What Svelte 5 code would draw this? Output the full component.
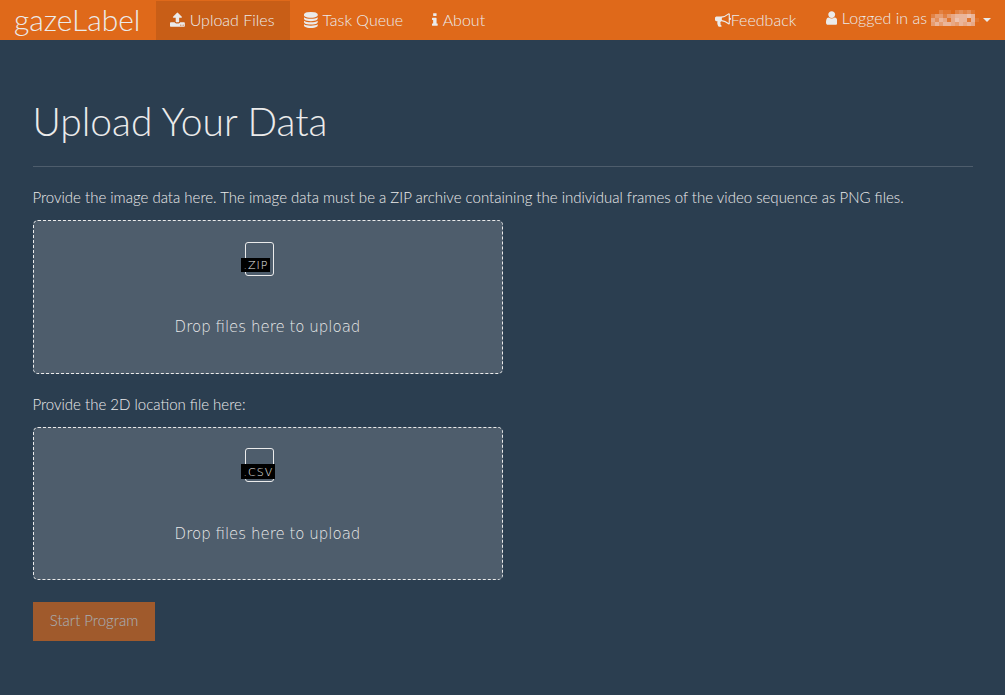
<script>
  const icons = {
    upload: 'M1344 1472q0-26-19-45t-45-19-45 19-19 45 19 45 45 19 45-19 19-45zm256 0q0-26-19-45t-45-19-45 19-19 45 19 45 45 19 45-19 19-45zm128-224v320q0 40-28 68t-68 28h-1472q-40 0-68-28t-28-68v-320q0-40 28-68t68-28h427q21 56 70.5 92t110.5 36h256q61 0 110.5-36t70.5-92h427q40 0 68 28t28 68zm-325-648q-17 40-59 40h-256v448q0 26-19 45t-45 19h-256q-26 0-45-19t-19-45v-448h-256q-42 0-59-40-17-39 14-69l448-448q18-19 45-19t45 19l448 448q31 30 14 69z',
    database: 'M896 768q237 0 443-43t325-127v170q0 69-103 128t-280 93.5-385 34.5-385-34.5-280-93.5-103-128v-170q119 84 325 127t443 43zm0 768q237 0 443-43t325-127v170q0 69-103 128t-280 93.5-385 34.5-385-34.5-280-93.5-103-128v-170q119 84 325 127t443 43zm0-384q237 0 443-43t325-127v170q0 69-103 128t-280 93.5-385 34.5-385-34.5-280-93.5-103-128v-170q119 84 325 127t443 43zm0-1152q208 0 385 34.5t280 93.5 103 128v128q0 69-103 128t-280 93.5-385 34.5-385-34.5-280-93.5-103-128v-128q0-69 103-128t280-93.5 385-34.5z',
    info: 'M1216 1344v128q0 26-19 45t-45 19h-512q-26 0-45-19t-19-45v-128q0-26 19-45t45-19h64v-384h-64q-26 0-45-19t-19-45v-128q0-26 19-45t45-19h384q26 0 45 19t19 45v576h64q26 0 45 19t19 45zm-128-1152v192q0 26-19 45t-45 19h-256q-26 0-45-19t-19-45v-192q0-26 19-45t45-19h256q26 0 45 19t19 45z',
    bullhorn: 'M1664 640q53 0 90.5 37.5t37.5 90.5-37.5 90.5-90.5 37.5v384q0 52-38 90t-90 38q-417-347-812-380-58 19-91 66t-31 100.5 40 92.5q-20 33-23 65.5t6 58 33.5 55 48 50 61.5 50.5q-29 58-111.5 83t-168.5 11.5-132-55.5q-7-23-29.5-87.5t-32-94.5-23-89-15-101 3.5-98.5 22-110.5h-122q-66 0-113-47t-47-113v-192q0-66 47-113t113-47h480q435 0 896-384 52 0 90 38t38 90v384zm-128 604v-954q-394 302-768 343v270q377 42 768 341z',
    user: 'M1536 1399q0 109-62.5 187t-150.5 78h-854q-88 0-150.5-78t-62.5-187q0-85 8.5-160.5t31.5-152 58.5-131 94-89 134.5-34.5q131 128 313 128t313-128q76 0 134.5 34.5t94 89 58.5 131 31.5 152 8.5 160.5zm-256-887q0 159-112.5 271.5t-271.5 112.5-271.5-112.5-112.5-271.5 112.5-271.5 271.5-112.5 271.5 112.5 112.5 271.5z'
  };
  // Opacity of each tile of the masked user name
  const mask = [
    [0, 0, 2, 1, 1, 0, 2, 3, 2, 3, 1, 0],
    [2, 4, 4, 2, 4, 5, 6, 6, 6, 7, 6, 0],
    [5, 3, 6, 5, 1, 5, 7, 6, 6, 1, 6, 1],
    [4, 6, 4, 6, 6, 5, 4, 6, 5, 6, 5, 0]
  ];
  const zones = [
    { id: 'zip', label: 'Provide the image data here. The image data must be a ZIP archive containing the individual frames of the video sequence as PNG files.', ext: '.ZIP' },
    { id: 'csv', label: 'Provide the 2D location file here:', ext: '.CSV' }
  ];
</script>

{#snippet icon(name, x, w)}
  <svg class="icon" width={w * 16 / 1792} height="16" viewBox="{x} 0 {w} 1792"><path d={icons[name]} /></svg>
{/snippet}

<nav>
  <a class="brand" href="#home">gazeLabel</a>
  <a class="link active" href="#upload">{@render icon('upload', 64, 1664)}<span class="spaced">Upload Files</span></a>
  <a class="link" href="#queue">{@render icon('database', 128, 1536)}<span class="spaced">Task Queue</span></a>
  <a class="link" href="#about">{@render icon('info', 576, 640)}<span class="spaced">About</span></a>
  <a class="link right" href="#feedback">{@render icon('bullhorn', 0, 1792)}<span>Feedback</span></a>
  <a class="link account" href="#account">
    {@render icon('user', 256, 1280)}<span class="spaced">Logged in as</span>
    <svg class="mask" width="48" height="16" viewBox="0 0 48 16" shape-rendering="crispEdges">
      {#each mask as row, y}
        {#each row as v, x}
          <rect x={x * 4} y={y * 4} width="4" height="4" opacity={v / 10} />
        {/each}
      {/each}
    </svg>
    <i class="caret"></i>
  </a>
</nav>

<main>
  <h1>Upload Your Data</h1>
  {#each zones as zone (zone.id)}
    <p>{zone.label}</p>
    <section class="zone {zone.id}">
      <div class="file"><span>{zone.ext}</span></div>
      <div class="message">Drop files here to upload</div>
    </section>
  {/each}
  <button disabled>Start Program</button>
</main>

<style>
  :global(body) {
    margin: 0;
    background: #2b3e50;
    color: #ebebeb;
    font: 300 15px/21.4px Lato, sans-serif;
  }
  nav {
    display: flex;
    height: 40px;
    background: #df691a;
    font-size: 16px;
    line-height: 22px;
  }
  nav a {
    color: #ebebeb;
    text-decoration: none;
    white-space: nowrap;
  }
  .brand {
    width: 142px;
    padding-left: 14px;
    font-size: 30px;
    line-height: 38px;
  }
  .link {
    display: flex;
    align-items: center;
    height: 39px;
    margin-top: 1px;
    padding: 0 15px 1px 14px;
    box-sizing: border-box;
  }
  .active {
    width: 134px;
    background: #c85e17;
  }
  .icon {
    fill: #ebebeb;
    flex: none;
  }
  .spaced {
    margin-left: 4.8px;
  }
  .right {
    margin-left: auto;
    padding-right: 15.5px;
  }
  .account {
    height: 35px;
    padding-right: 14px;
  }
  .account .spaced {
    margin-left: 4.6px;
  }
  .mask {
    margin-left: 4px;
    fill: #f2e8f0;
  }
  .caret {
    margin-left: 4px;
    margin-top: 3px;
    border: 4px solid transparent;
    border-top-color: #ebebeb;
    border-bottom: 0;
  }
  main {
    width: 940px;
    padding: 59px 0 0 33px;
  }
  h1 {
    margin: 0 0 20px;
    height: 67px;
    border-bottom: 1px solid #4e5d6c;
    font-size: 39px;
    font-weight: 300;
    line-height: 44px;
    text-indent: -0.6px;
  }
  p {
    margin: 0;
    height: 33px;
    text-indent: -0.6px;
  }
  .zone {
    width: 470px;
    height: 154px;
    margin-bottom: 20px;
    padding-top: 21px;
    box-sizing: border-box;
    border: 1px dashed #ebebeb;
    border-radius: 5px;
    background: #4e5d6c;
    font-family: "DejaVu Sans", sans-serif;
    font-weight: 200;
  }
  .csv {
    height: 153px;
    padding-top: 20px;
    margin-bottom: 22px;
  }
  .file {
    width: 27px;
    height: 17px;
    padding-top: 15px;
    margin-left: 211px;
    border: 1px solid #ebebeb;
    border-radius: 3px;
  }
  .file span {
    display: block;
    width: max-content;
    margin-left: -5px;
    padding: 1px 1.5px 0 2.5px;
    background: #000;
    font-size: 11px;
    line-height: 13px;
    letter-spacing: 1px;
  }
  .csv .file span {
    padding-top: 2px;
  }
  .message {
    margin: 41px 1px 0 0;
    text-align: center;
  }
  .csv .message {
    margin-top: 42px;
  }
  button {
    display: block;
    width: 122px;
    height: 39px;
    padding: 0 0 2px;
    border: 0;
    background: #df691a;
    color: #ebebeb;
    font: inherit;
    opacity: .65;
  }
</style>
